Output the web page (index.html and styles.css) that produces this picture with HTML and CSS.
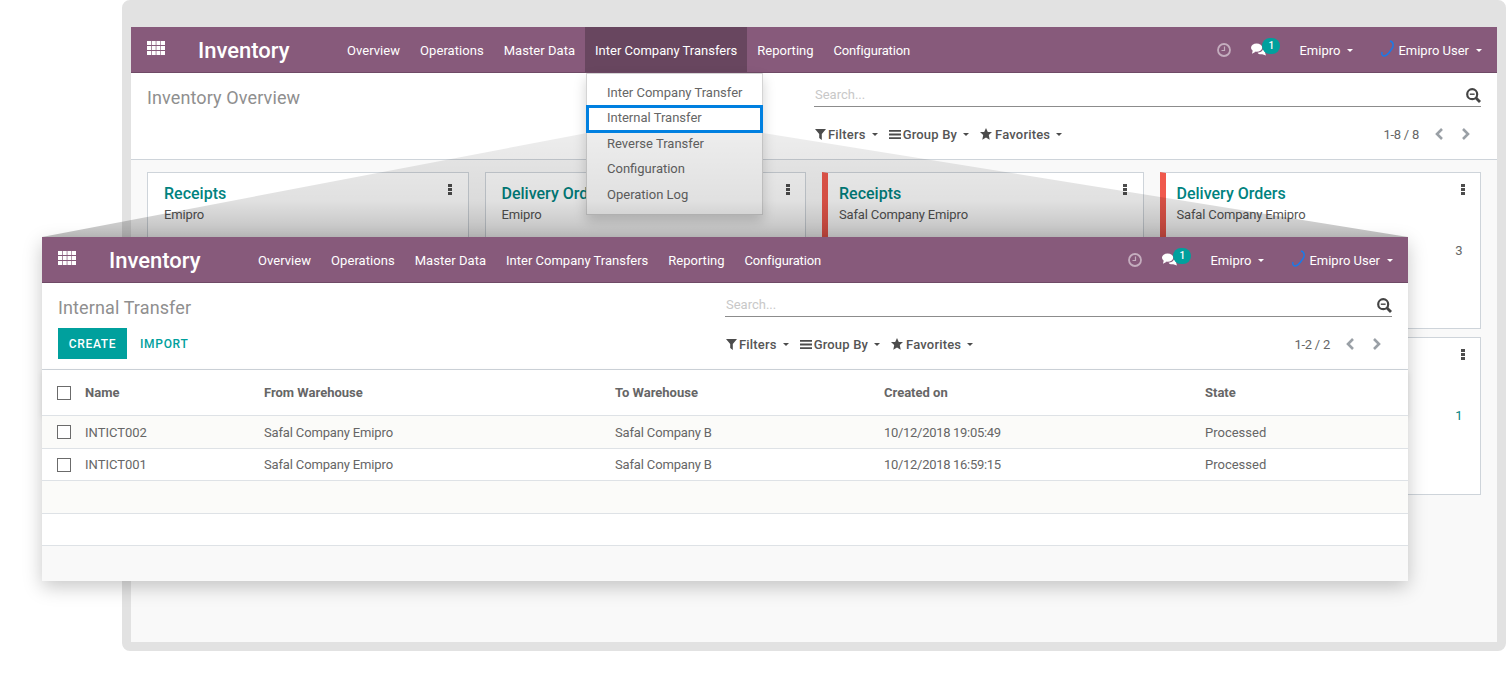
FILE: index.html
```html
<!DOCTYPE html>
<html>
   <head>
      <meta name="viewport" content="width=device-width, initial-scale=1">
      <title>Inventory</title>
      <link rel="stylesheet" href="styles.css">
   </head>
   <body>
      <svg class="defs" width="0" height="0">
        <symbol id="i-apps" viewBox="0 0 18 14">
          <path d="M0 0h4v4H0zM4.700 0h4v4h-4zM9.400 0h4v4h-4zM14 0h4v4h-4zM0 5h4v4H0zM4.700 5h4v4h-4zM9.400 5h4v4h-4zM14 5h4v4h-4zM0 10h4v4H0zM4.700 10h4v4h-4zM9.400 10h4v4h-4zM14 10h4v4h-4z" fill="#fff"/>
        </symbol>
        <symbol id="i-clock" viewBox="0 0 14 14">
          <circle cx="7" cy="7" r="6" fill="none" stroke="currentColor" stroke-width="1.800"/>
          <path d="M7.500 3.500v4H4.500" fill="none" stroke="currentColor" stroke-width="1.200"/>
        </symbol>
        <symbol id="i-chat" viewBox="0 0 16 13">
          <ellipse cx="6" cy="4.500" rx="6" ry="4.500" fill="#fff"/>
          <path d="M2 7l-1 4 4-2z" fill="#fff"/>
          <path d="M13 5c2 1 3 3 2 5l1 3-4-1.500c-2 .5-4 0-5-1.500 3 0 6-2 6-5z" fill="#fff"/>
        </symbol>
        <symbol id="i-swirl" viewBox="0 0 14 18">
          <path d="M9 1c4 1 4 6 1 9-2 3-5 6-7 6-2 0-2.500-2-2-4" fill="none" stroke="#1a7ae8" stroke-width="1.500"/>
        </symbol>
        <symbol id="i-search" viewBox="0 0 15 15">
          <circle cx="6.200" cy="6.200" r="5" fill="none" stroke="#444" stroke-width="2.200"/>
          <path d="M3.800 6.200h4.800" stroke="#444" stroke-width="1.400"/>
          <path d="M9.800 9.800L14 14" stroke="#444" stroke-width="2.800"/>
        </symbol>
        <symbol id="i-filter" viewBox="0 0 11 11">
          <path d="M0 0h11L6.800 5v6L4.200 9V5z" fill="#4c4c4c"/>
        </symbol>
        <symbol id="i-bars" viewBox="0 0 12 9">
          <path d="M0 0h12v1.800H0zM0 3.600h12v1.800H0zM0 7.200h12V9H0z" fill="#4c4c4c"/>
        </symbol>
        <symbol id="i-star" viewBox="0 0 12 12">
          <path d="M6 0l1.800 4H12L8.800 7l.9 4.700L6 9.500l-3.700 2.200.9-4.700L0 4h4.200z" fill="#4c4c4c"/>
        </symbol>
        <symbol id="i-prev" viewBox="0 0 10 12">
          <path d="M8 1L3 6l5 5" fill="none" stroke="#9aa0a6" stroke-width="2.600"/>
        </symbol>
        <symbol id="i-next" viewBox="0 0 10 12">
          <path d="M2 1l5 5-5 5" fill="none" stroke="#9aa0a6" stroke-width="2.600"/>
        </symbol>
        <symbol id="i-kebab" viewBox="0 0 4 11">
          <path d="M0 0h4v3H0zM0 4h4v3H0zM0 8h4v3H0z" fill="#4c4c4c"/>
        </symbol>
      </svg>

      <div class="stage">
        <!-- back window: overview dashboard -->
        <div class="frame">
          <div class="navbar">
            <div class="brand">
              <svg class="icon-apps"><use href="#i-apps"/></svg>
              <span class="brand-name">Inventory</span>
            </div>
            <div class="menu">
              <a>Overview</a>
              <a>Operations</a>
              <a>Master Data</a>
              <a class="active">Inter Company Transfers</a>
              <a>Reporting</a>
              <a>Configuration</a>
            </div>
            <div class="systray">
              <svg class="icon-clock"><use href="#i-clock"/></svg>
              <span class="notify"><svg class="icon-chat"><use href="#i-chat"/></svg><span class="badge">1</span></span>
              <span class="sys-item">Emipro<i class="caret"></i></span>
              <span class="sys-user"><svg class="icon-swirl"><use href="#i-swirl"/></svg><span class="sys-item">Emipro User<i class="caret"></i></span></span>
            </div>
          </div>

          <div class="panel">
            <div class="panel-left">
              <div class="crumb">Inventory Overview</div>
            </div>
            <div class="panel-right">
              <div class="search"><span>Search...</span><svg class="icon-search"><use href="#i-search"/></svg></div>
              <div class="tools">
                <div class="filters">
                  <span class="tool"><svg class="icon-filter"><use href="#i-filter"/></svg>Filters<i class="caret dark"></i></span>
                  <span class="tool"><svg class="icon-bars"><use href="#i-bars"/></svg>Group By<i class="caret dark"></i></span>
                  <span class="tool"><svg class="icon-star"><use href="#i-star"/></svg>Favorites<i class="caret dark"></i></span>
                </div>
                <div class="pager">
                  <span class="pager-value">1-8 / 8</span>
                  <svg class="icon-page"><use href="#i-prev"/></svg>
                  <svg class="icon-page"><use href="#i-next"/></svg>
                </div>
              </div>
            </div>
          </div>

          <div class="kanban">
            <div class="card">
              <div class="card-head"><div><div class="card-title">Receipts</div><div class="card-sub">Emipro</div></div><svg class="icon-kebab"><use href="#i-kebab"/></svg></div>
            </div>
            <div class="card">
              <div class="card-head"><div><div class="card-title">Delivery Orders</div><div class="card-sub">Emipro</div></div><svg class="icon-kebab"><use href="#i-kebab"/></svg></div>
            </div>
            <div class="card red">
              <div class="card-head"><div><div class="card-title">Receipts</div><div class="card-sub">Safal Company Emipro</div></div><svg class="icon-kebab"><use href="#i-kebab"/></svg></div>
            </div>
            <div class="card red">
              <div class="card-head"><div><div class="card-title">Delivery Orders</div><div class="card-sub">Safal Company Emipro</div></div><svg class="icon-kebab"><use href="#i-kebab"/></svg></div>
              <div class="card-count">3</div>
            </div>
            <div class="card"></div>
            <div class="card"></div>
            <div class="card"></div>
            <div class="card">
              <div class="card-head"><div><div class="card-title">&nbsp;</div><div class="card-sub">&nbsp;</div></div><svg class="icon-kebab"><use href="#i-kebab"/></svg></div>
              <div class="card-count teal">1</div>
            </div>
          </div>

          <div class="dropdown">
            <a>Inter Company Transfer</a>
            <a class="marked">Internal Transfer</a>
            <a>Reverse Transfer</a>
            <a>Configuration</a>
            <a>Operation Log</a>
          </div>
        </div>

        <!-- grey beam from the marked menu item to the front window -->
        <svg class="beam" width="1506" height="699">
          <defs>
            <linearGradient id="beam-fill" x1="0" y1="133" x2="0" y2="237" gradientUnits="userSpaceOnUse">
              <stop offset="0" stop-color="#000" stop-opacity="0.07"/>
              <stop offset="0.65" stop-color="#000" stop-opacity="0.12"/>
              <stop offset="1" stop-color="#000" stop-opacity="0.25"/>
            </linearGradient>
          </defs>
          <polygon points="587,133 763,133 1408,237 42,237" fill="url(#beam-fill)"/>
        </svg>

        <!-- front window: internal transfer list -->
        <div class="popup">
          <div class="navbar">
            <div class="brand">
              <svg class="icon-apps"><use href="#i-apps"/></svg>
              <span class="brand-name">Inventory</span>
            </div>
            <div class="menu">
              <a>Overview</a>
              <a>Operations</a>
              <a>Master Data</a>
              <a>Inter Company Transfers</a>
              <a>Reporting</a>
              <a>Configuration</a>
            </div>
            <div class="systray">
              <svg class="icon-clock"><use href="#i-clock"/></svg>
              <span class="notify"><svg class="icon-chat"><use href="#i-chat"/></svg><span class="badge">1</span></span>
              <span class="sys-item">Emipro<i class="caret"></i></span>
              <span class="sys-user"><svg class="icon-swirl"><use href="#i-swirl"/></svg><span class="sys-item">Emipro User<i class="caret"></i></span></span>
            </div>
          </div>

          <div class="panel">
            <div class="panel-left">
              <div class="crumb">Internal Transfer</div>
              <div class="actions">
                <button class="btn-create">CREATE</button>
                <button class="btn-import">IMPORT</button>
              </div>
            </div>
            <div class="panel-right">
              <div class="search"><span>Search...</span><svg class="icon-search"><use href="#i-search"/></svg></div>
              <div class="tools">
                <div class="filters">
                  <span class="tool"><svg class="icon-filter"><use href="#i-filter"/></svg>Filters<i class="caret dark"></i></span>
                  <span class="tool"><svg class="icon-bars"><use href="#i-bars"/></svg>Group By<i class="caret dark"></i></span>
                  <span class="tool"><svg class="icon-star"><use href="#i-star"/></svg>Favorites<i class="caret dark"></i></span>
                </div>
                <div class="pager">
                  <span class="pager-value">1-2 / 2</span>
                  <svg class="icon-page"><use href="#i-prev"/></svg>
                  <svg class="icon-page"><use href="#i-next"/></svg>
                </div>
              </div>
            </div>
          </div>

          <table class="list">
            <colgroup>
              <col class="col-check"><col class="col-name"><col class="col-from"><col class="col-to"><col class="col-date"><col>
            </colgroup>
            <thead>
              <tr><th><i class="check"></i></th><th>Name</th><th>From Warehouse</th><th>To Warehouse</th><th>Created on</th><th>State</th></tr>
            </thead>
            <tbody>
              <tr><td><i class="check"></i></td><td>INTICT002</td><td class="tight">Safal Company Emipro</td><td class="tight">Safal Company B</td><td class="date">10/12/2018 19:05:49</td><td>Processed</td></tr>
              <tr><td><i class="check"></i></td><td>INTICT001</td><td class="tight">Safal Company Emipro</td><td class="tight">Safal Company B</td><td class="date">10/12/2018 16:59:15</td><td>Processed</td></tr>
              <tr><td colspan="6"></td></tr>
              <tr><td colspan="6"></td></tr>
            </tbody>
          </table>
        </div>
      </div>
   </body>
</html>
```

FILE: styles.css
```css
* {
  box-sizing: border-box;
}

html, body {
  margin: 0;
  overflow: hidden;
  background: #fff;
}

body {
  font-family: Roboto, "Liberation Sans", sans-serif;
  font-size: 13px;
  color: #4c4c4c;
}

.defs {
  display: block;
}

.stage {
  position: relative;
  width: 1506px;
  height: 699px;
}

.frame {
  position: relative;
  width: 1384px;
  height: 651px;
  margin-left: 122px;
  border: 9px solid #e2e2e2;
  border-top-width: 27px;
  border-radius: 8px;
  background: #f9f9f9;
}

/* navbar */
.navbar {
  display: flex;
  height: 46px;
  background: #875a7b;
  border-bottom: 1px solid #6f4a66;
  color: #fff;
}

.brand {
  display: flex;
  align-items: center;
  width: 206px;
  padding-left: 16px;
}

.icon-apps {
  width: 18px;
  height: 14px;
  margin-top: -4px;
}

.brand-name {
  margin-top: 2px;
  margin-left: 33px;
  font-size: 22px;
  font-weight: 500;
  line-height: 44px;
}

.menu {
  display: flex;
}

.menu a {
  padding: 0 10px;
  line-height: 47px;
}

.menu a:nth-child(-n+3) {
  letter-spacing: 0.05px;
}

.menu a:last-child {
  letter-spacing: -0.15px;
}

.menu a.active {
  background: #68465f;
}

.systray {
  display: flex;
  align-items: center;
  margin-left: auto;
  padding-right: 15px;
  padding-top: 1px;
}

.icon-clock {
  width: 14px;
  height: 14px;
  margin-right: 20px;
  color: #c4adbe;
}

.notify {
  position: relative;
  display: block;
  width: 29px;
  height: 14px;
  margin-right: 19px;
}

.icon-chat {
  display: block;
  width: 15px;
  height: 13px;
}

.badge {
  position: absolute;
  left: 11px;
  top: -5px;
  width: 18px;
  height: 16px;
  border-radius: 8px;
  background: #00a09d;
  font-size: 10px;
  font-weight: 500;
  line-height: 16px;
  text-align: center;
}

.sys-item {
  display: inline-flex;
  align-items: center;
}

.sys-user {
  display: flex;
  align-items: center;
  margin-left: 28px;
}

.icon-swirl {
  width: 14px;
  height: 18px;
  margin-right: 3px;
  margin-top: -2px;
}

.caret {
  display: inline-block;
  margin-left: 7px;
  border-top: 3px solid #fff;
  border-left: 3px solid transparent;
  border-right: 3px solid transparent;
}

.caret.dark {
  margin-left: 6px;
  border-top-color: #4c4c4c;
}

/* control panel */
.panel {
  display: flex;
  height: 87px;
  padding: 0 16px;
  background: #fff;
  border-bottom: 1px solid #ced4da;
}

.panel-left {
  width: 667px;
  padding-top: 13px;
}

.crumb {
  font-size: 18px;
  line-height: 24px;
  letter-spacing: 0.12px;
  color: #8f8f8f;
}

.actions {
  display: flex;
  align-items: center;
  margin-top: 8px;
}

.btn-create, .btn-import {
  height: 31px;
  border: none;
  font-family: Roboto, "Liberation Sans", sans-serif;
  font-size: 12px;
  font-weight: 500;
  letter-spacing: 0.7px;
}

.btn-create {
  width: 69px;
  padding: 0;
  background: #00a09d;
  color: #fff;
}

.btn-import {
  margin-left: 13px;
  padding: 0;
  background: none;
  color: #00a09d;
}

.panel-right {
  width: 667px;
  padding-top: 11px;
}

.search {
  display: flex;
  align-items: center;
  justify-content: space-between;
  height: 23px;
  padding-left: 1px;
  border-bottom: 1px solid #8c8c8c;
  font-size: 13px;
  color: #c8c8c8;
}

.search span {
  padding-bottom: 2px;
}

.icon-search {
  width: 15px;
  height: 15px;
  margin-top: 1px;
}

.tools {
  display: flex;
  justify-content: space-between;
  align-items: center;
  height: 24px;
  margin-top: 15px;
}

.filters {
  display: flex;
  padding-left: 1px;
}

.tool {
  display: flex;
  align-items: center;
  margin-right: 11px;
  font-weight: 500;
  letter-spacing: 0.18px;
  color: #555;
}

.icon-filter {
  width: 11px;
  height: 11px;
  margin-right: 2px;
}

.icon-bars {
  width: 12px;
  height: 9px;
  margin-right: 2px;
}

.icon-star {
  width: 12px;
  height: 12px;
  margin-right: 3px;
}

.pager {
  display: flex;
  align-items: center;
  padding-right: 10px;
}

.pager-value {
  margin-right: 15px;
  letter-spacing: -0.25px;
  color: #666;
}

.icon-page {
  width: 10px;
  height: 12px;
  margin-left: 17px;
}

.pager-value + .icon-page {
  margin-left: 0;
}

/* dashboard cards */
.kanban {
  display: grid;
  grid-template-columns: repeat(4, 1fr);
  grid-template-rows: 157px 158px;
  gap: 8px 16px;
  padding: 12px 16px;
}

.card {
  padding: 9px 15.500px 0 16px;
  background: #fff;
  border: 1px solid #ced4da;
}

.card.red {
  padding-left: 11px;
  border-left: 6px solid #f0594d;
}

.card-head {
  display: flex;
  justify-content: space-between;
}

.card-title {
  font-size: 16px;
  font-weight: 500;
  line-height: 24px;
  color: #00837f;
}

.card-sub {
  line-height: 18px;
  letter-spacing: -0.15px;
  color: #555;
}

.icon-kebab {
  width: 4px;
  height: 11px;
  margin-top: 2px;
}

.card-count {
  margin-top: 19px;
  padding-right: 2px;
  line-height: 16px;
  text-align: right;
  color: #666;
}

.card-count.teal {
  color: #00837f;
}

/* open menu */
.dropdown {
  position: absolute;
  left: 455px;
  top: 46px;
  width: 177px;
  padding: 7px 0 6px;
  background: #fff;
  border: 1px solid #d4d4d4;
  box-shadow: 0 6px 12px rgba(0, 0, 0, 0.18);
  z-index: 1;
}

.dropdown a {
  position: relative;
  display: block;
  height: 25.400px;
  padding-left: 20px;
  line-height: 24.500px;
  color: #666;
}

.dropdown a.marked::after {
  content: "";
  position: absolute;
  left: -1px;
  right: -1px;
  top: -1.500px;
  bottom: -1px;
  border: 3px solid #0080e0;
}

.beam {
  position: absolute;
  left: 0;
  top: 0;
  z-index: 2;
}

/* front window */
.popup {
  position: absolute;
  left: 42px;
  top: 237px;
  width: 1366px;
  height: 344px;
  background: #f9f9f9;
  box-shadow: 0 6px 18px rgba(0, 0, 0, 0.22);
  z-index: 3;
}

.list {
  width: 100%;
  border-collapse: separate;
  border-spacing: 0;
  table-layout: fixed;
  color: #666;
}

.col-check { width: 43px; }
.col-name { width: 179px; }
.col-from { width: 351px; }
.col-to { width: 269px; }
.col-date { width: 321px; }

.list th, .list td {
  padding: 0;
  text-align: left;
}

.list th:first-child, .list td:first-child {
  padding-left: 15px;
}

.list thead tr {
  height: 46px;
  background: #fff;
  box-shadow: 0 2px 6px rgba(0, 0, 0, 0.08);
}

.list th {
  border-bottom: 1px solid #dee2e6;
  font-weight: 700;
}

.list tbody tr {
  height: 32px;
  background: #fff;
}

.list tbody tr:nth-child(odd) {
  height: 33px;
  background: #fbfbf9;
}

.list td {
  border-bottom: 1px solid #dee2e6;
}

.list td.tight {
  letter-spacing: -0.15px;
}

.list td.date {
  letter-spacing: -0.3px;
}

.check {
  display: block;
  width: 14px;
  height: 14px;
  background: #fff;
  border: 1px solid #6b6b6b;
}
```
